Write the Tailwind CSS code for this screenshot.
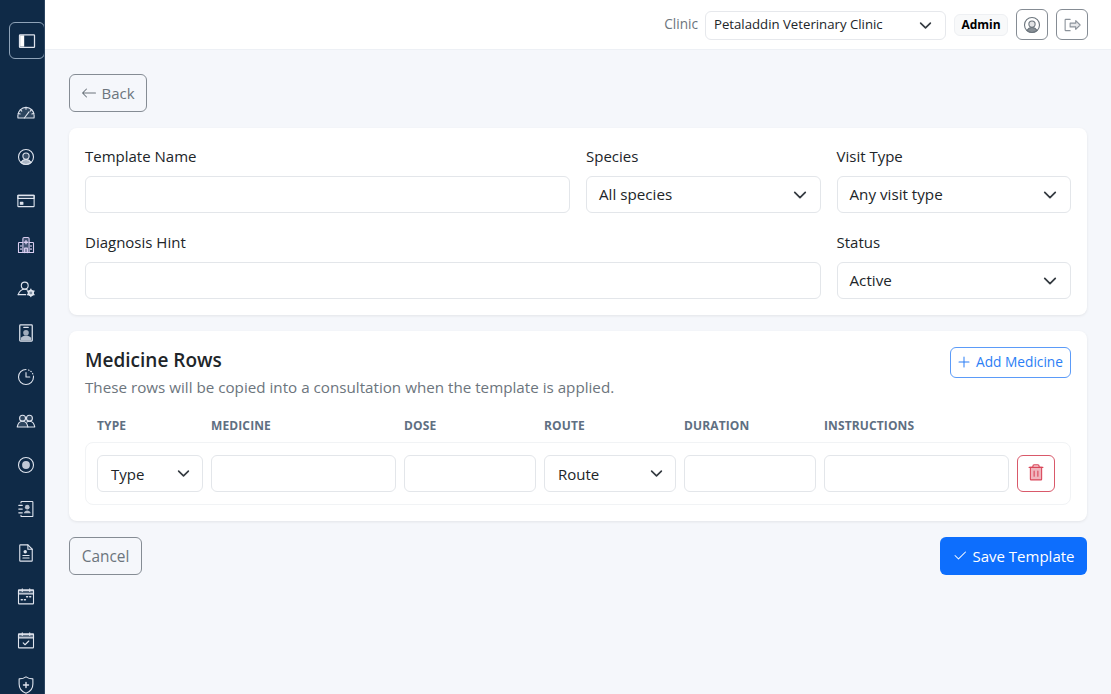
<!doctype html>
<html lang="en">
<head>
<meta charset="utf-8">
<title>Template</title>
<script src="https://cdn.jsdelivr.net/npm/@tailwindcss/browser@4"></script>
</head>
<body class="m-0 overflow-hidden bg-[#f5f7fb] font-['Open_Sans','Noto_Sans',sans-serif] text-[#212529]">
<div class="flex h-[694px] w-[1111px] overflow-hidden">
  <aside class="flex w-[45px] shrink-0 flex-col overflow-hidden border-r border-[#2c4561] bg-[#0f2a47] text-[#dfe4ee]">
    <div class="h-[91px] shrink-0 pt-[22px] pl-[9px]">
      <div class="flex h-[37px] w-[36px] items-center justify-center rounded-md border border-[#8fa3b8]">
        <svg class="h-5 w-5" viewBox="0 0 256 256" fill="none" stroke="currentColor" stroke-width="16" stroke-linejoin="round"><rect x="32" y="48" width="192" height="160" rx="8"/><rect x="40" y="56" width="52" height="144" fill="#fff" stroke="none"/></svg>
      </div>
    </div>
    <nav class="flex flex-col">
      <a class="flex h-11 shrink-0 items-center justify-center pl-[7px]"><svg class="h-5 w-5" viewBox="0 0 256 256" fill="none" stroke="currentColor" stroke-width="14" stroke-linecap="round" stroke-linejoin="round"><path fill="currentColor" fill-opacity=".15" d="M24 184v-23C24 104 70 56 128 56a104 104 0 0 1 104 104v24a8 8 0 0 1-8 8H32a8 8 0 0 1-8-8Z"/><path d="M128 56v24M28 133l26 7M228 133l-26 7M56 86l18 18M200 86l-18 18M107 192l59-78"/></svg></a>
      <a class="flex h-11 shrink-0 items-center justify-center pl-[7px]"><svg class="h-5 w-5" viewBox="0 0 256 256" fill="none" stroke="currentColor" stroke-width="14" stroke-linecap="round" stroke-linejoin="round"><circle cx="128" cy="128" r="96"/><path fill="currentColor" fill-opacity=".75" d="M64 199a72 72 0 0 1 128 0 96 96 0 0 1-128 0Z"/><circle cx="128" cy="116" r="40" fill="currentColor" fill-opacity=".2"/></svg></a>
      <a class="flex h-11 shrink-0 items-center justify-center pl-[7px]"><svg class="h-5 w-5" viewBox="0 0 256 256" fill="none" stroke="currentColor" stroke-width="14" stroke-linecap="round" stroke-linejoin="round"><rect x="24" y="56" width="208" height="144" rx="8"/><path fill="currentColor" fill-opacity=".2" d="M24 56h208v40H24z"/><rect x="56" y="146" width="32" height="24" fill="currentColor"/></svg></a>
      <a class="flex h-11 shrink-0 items-center justify-center pl-[7px]"><svg class="h-5 w-5" viewBox="0 0 256 256" fill="none" stroke="#d9cdf0" stroke-width="14" stroke-linecap="round" stroke-linejoin="round"><path fill="#d9cdf0" fill-opacity=".25" d="M88 224V48a16 16 0 0 1 16-16h48a16 16 0 0 1 16 16v176"/><path d="M88 96H40a8 8 0 0 0-8 8v120h192V104a8 8 0 0 0-8-8h-48"/><path d="M128 72v40M108 92h40M64 136v8M64 176v8M192 136v8M192 176v8M112 224v-56h32v56" stroke-width="18"/></svg></a>
      <a class="flex h-11 shrink-0 items-center justify-center pl-[7px]"><svg class="h-5 w-5" viewBox="0 0 256 256" fill="none" stroke="currentColor" stroke-width="14" stroke-linecap="round" stroke-linejoin="round"><circle cx="112" cy="84" r="44"/><path d="M28 200c14-42 48-68 84-68 12 0 24 3 34 8"/><path d="M28 200h96"/><circle cx="190" cy="178" r="30" fill="currentColor" fill-opacity=".55" stroke-width="22"/><path stroke-width="18" d="M190 132v16M190 208v16M150 155l14 8M216 193l14 8M150 201l14-8M216 163l14-8"/></svg></a>
      <a class="flex h-11 shrink-0 items-center justify-center pl-[7px]"><svg class="h-5 w-5" viewBox="0 0 256 256" fill="none" stroke="currentColor" stroke-width="16" stroke-linecap="round" stroke-linejoin="round"><rect x="48" y="24" width="160" height="208" rx="10"/><path d="M100 56h56"/><circle cx="128" cy="124" r="36" fill="currentColor" fill-opacity=".7" stroke="none"/><path fill="currentColor" fill-opacity=".8" stroke="none" d="M62 190c14-20 38-28 66-28s52 8 66 28v34H62Z"/></svg></a>
      <a class="flex h-11 shrink-0 items-center justify-center pl-[7px]"><svg class="h-5 w-5" viewBox="0 0 256 256" fill="none" stroke="currentColor" stroke-width="14" stroke-linecap="round" stroke-linejoin="round"><path d="M128 32a96 96 0 1 0 96 96"/><path stroke-dasharray="8 26" d="M160 38a96 96 0 0 1 64 90"/><path d="M128 72v56h48"/></svg></a>
      <a class="flex h-11 shrink-0 items-center justify-center pl-[7px]"><svg class="h-5 w-5" viewBox="0 0 256 256" fill="none" stroke="currentColor" stroke-width="14" stroke-linecap="round" stroke-linejoin="round"><circle cx="84" cy="92" r="38" fill="currentColor" fill-opacity=".15"/><circle cx="172" cy="92" r="38" fill="currentColor" fill-opacity=".15"/><path d="M16 204c8-44 34-72 68-72s60 28 68 72Z" fill="currentColor" fill-opacity=".15"/><path d="M140 140c10-6 20-8 32-8 34 0 60 28 68 72h-88"/></svg></a>
      <a class="flex h-11 shrink-0 items-center justify-center pl-[7px]"><svg class="h-5 w-5" viewBox="0 0 256 256" fill="none" stroke="currentColor" stroke-width="14"><circle cx="128" cy="128" r="96"/><circle cx="128" cy="128" r="50" fill="currentColor" fill-opacity=".85" stroke="none"/></svg></a>
      <a class="flex h-11 shrink-0 items-center justify-center pl-[7px]"><svg class="h-5 w-5" viewBox="0 0 256 256" fill="none" stroke="currentColor" stroke-width="14" stroke-linecap="round" stroke-linejoin="round"><path d="M64 48V40a8 8 0 0 1 8-8h136a8 8 0 0 1 8 8v176a8 8 0 0 1-8 8H72a8 8 0 0 1-8-8v-8"/><path stroke-width="16" d="M36 80h44M36 128h44M36 176h44"/><circle cx="144" cy="104" r="30" fill="currentColor" fill-opacity=".8" stroke="none"/><path fill="currentColor" fill-opacity=".8" stroke="none" d="M100 182c6-24 24-36 44-36s38 12 44 36Z"/></svg></a>
      <a class="flex h-11 shrink-0 items-center justify-center pl-[7px]"><svg class="h-5 w-5" viewBox="0 0 256 256" fill="none" stroke="currentColor" stroke-width="14" stroke-linecap="round" stroke-linejoin="round"><path d="M200 232H56a8 8 0 0 1-8-8V32a8 8 0 0 1 8-8h96l56 56v144a8 8 0 0 1-8 8Z"/><path d="M152 24v56h56"/><circle cx="118" cy="112" r="22" fill="currentColor" stroke="none"/><path d="M88 160h80M88 192h80"/></svg></a>
      <a class="flex h-11 shrink-0 items-center justify-center pl-[7px]"><svg class="h-5 w-5" viewBox="0 0 256 256" fill="none" stroke="currentColor" stroke-width="14" stroke-linecap="round" stroke-linejoin="round"><rect x="32" y="40" width="192" height="176" rx="8"/><path fill="currentColor" fill-opacity=".3" d="M32 40h192v48H32z"/><path d="M176 24v32M80 24v32"/><path stroke-width="20" d="M136 124h12M176 124h12M68 164h12M108 164h12"/></svg></a>
      <a class="flex h-11 shrink-0 items-center justify-center pl-[7px]"><svg class="h-5 w-5" viewBox="0 0 256 256" fill="none" stroke="currentColor" stroke-width="14" stroke-linecap="round" stroke-linejoin="round"><rect x="32" y="40" width="192" height="176" rx="8"/><path fill="currentColor" fill-opacity=".4" d="M32 40h192v48H32z"/><path d="M176 24v32M80 24v32M92 152l24 24 48-48"/></svg></a>
      <a class="flex h-11 shrink-0 items-center justify-center pl-[7px]"><svg class="h-5 w-5" viewBox="0 0 256 256" fill="none" stroke="currentColor" stroke-width="14" stroke-linecap="round" stroke-linejoin="round"><path d="M128 24c24 18 56 26 88 26v66c0 72-48 104-88 118-40-14-88-46-88-118V50c32 0 64-8 88-26Z"/><path stroke-width="18" d="M96 128h64M128 96v64"/></svg></a>
    </nav>
  </aside>
  <div class="flex min-w-0 flex-1 flex-col">
    <header class="flex h-[50px] shrink-0 items-center justify-end border-b border-[#edf0f5] bg-white pr-[23px]">
      <span class="mr-[7px] text-[13.6px] text-[#6c757d]">Clinic</span>
      <div class="mt-[1px] mr-2 flex h-[29px] w-[241px] items-center justify-between rounded-md border border-[#e6e8ec] bg-white pr-[13px] pl-2 text-[13.2px]">
        <span>Petaladdin Veterinary Clinic</span>
        <svg class="h-[13px] w-[13px]" viewBox="0 0 16 16" fill="none" stroke="#343a40" stroke-width="2" stroke-linecap="round" stroke-linejoin="round"><path d="m2 5 6 6 6-6"/></svg>
      </div>
      <span class="mr-2 flex h-[22px] w-[54px] items-center justify-center rounded-md border border-[#eef0f3] bg-[#f8f9fa] text-[12px] font-bold text-black">Admin</span>
      <button class="mr-2 flex h-[31px] w-[32px] items-center justify-center rounded-md border border-[#858c94] text-[#6c757d]"><svg class="h-5 w-5" viewBox="0 0 256 256" fill="none" stroke="currentColor" stroke-width="14" stroke-linecap="round" stroke-linejoin="round"><circle cx="128" cy="128" r="96"/><path fill="currentColor" fill-opacity=".8" d="M64 199a72 72 0 0 1 128 0 96 96 0 0 1-128 0Z"/><circle cx="128" cy="116" r="40" fill="currentColor" fill-opacity=".2"/></svg></button>
      <button class="flex h-[31px] w-[32px] items-center justify-center rounded-md border border-[#858c94] text-[#8b929a]"><svg class="h-5 w-5" viewBox="0 0 256 256" fill="none" stroke="currentColor" stroke-width="14" stroke-linecap="round" stroke-linejoin="round"><path d="M104 56H48a8 8 0 0 0-8 8v128a8 8 0 0 0 8 8h56"/><path fill="currentColor" fill-opacity=".2" d="M104 104h72V72l56 56-56 56v-32h-72Z"/></svg></button>
    </header>
    <main class="flex-1 px-6 pt-6">
      <button class="mb-4 flex h-[37.5px] w-[78px] items-center justify-center gap-1 rounded-md border border-[#858c94] text-[15px] text-[#6c757d]"><svg class="h-4 w-4" viewBox="0 0 16 16" fill="currentColor"><path fill-rule="evenodd" d="M15 8a.5.5 0 0 0-.5-.5H2.707l3.147-3.146a.5.500 0 1 0-.708-.708l-4 4a.5.500 0 0 0 0 .708l4 4a.5.500 0 0 0 .708-.708L2.707 8.500H14.500A.5.5 0 0 0 15 8z"/></svg>Back</button>
      <section class="mb-4 rounded-lg bg-white px-4 pt-4 pb-[15.5px] shadow-[0_1px_3px_rgba(0,0,0,0.08)]">
        <div class="grid grid-cols-12 gap-x-4 gap-y-[16.5px]">
          <label class="col-span-6 block"><span class="mb-2 block h-6 text-[15px] leading-6">Template Name</span><span class="block h-[37.5px] rounded-md border border-[#e3e6ea] bg-white"></span></label>
          <label class="col-span-3 block"><span class="mb-2 block h-6 text-[15px] leading-6">Species</span><span class="flex h-[37.5px] items-center justify-between rounded-md border border-[#e3e6ea] pt-[1px] pr-[13px] pl-3 text-[15.2px]">All species<svg class="h-3.5 w-3.5" viewBox="0 0 16 16" fill="none" stroke="#343a40" stroke-width="2" stroke-linecap="round" stroke-linejoin="round"><path d="m2 5 6 6 6-6"/></svg></span></label>
          <label class="col-span-3 block"><span class="mb-2 block h-6 text-[15px] leading-6">Visit Type</span><span class="flex h-[37.5px] items-center justify-between rounded-md border border-[#e3e6ea] pt-[1px] pr-[13px] pl-3 text-[15.2px]">Any visit type<svg class="h-3.5 w-3.5" viewBox="0 0 16 16" fill="none" stroke="#343a40" stroke-width="2" stroke-linecap="round" stroke-linejoin="round"><path d="m2 5 6 6 6-6"/></svg></span></label>
          <label class="col-span-9 block"><span class="mb-2 block h-6 text-[15px] leading-6">Diagnosis Hint</span><span class="block h-[37.5px] rounded-md border border-[#e3e6ea] bg-white"></span></label>
          <label class="col-span-3 block"><span class="mb-2 block h-6 text-[15px] leading-6">Status</span><span class="flex h-[37.5px] items-center justify-between rounded-md border border-[#e3e6ea] pt-[1px] pr-[13px] pl-3 text-[15.2px]">Active<svg class="h-3.5 w-3.5" viewBox="0 0 16 16" fill="none" stroke="#343a40" stroke-width="2" stroke-linecap="round" stroke-linejoin="round"><path d="m2 5 6 6 6-6"/></svg></span></label>
        </div>
      </section>
      <section class="mb-4 rounded-lg bg-white p-4 shadow-[0_1px_3px_rgba(0,0,0,0.08)]">
        <div class="flex items-start justify-between">
          <div>
            <h2 class="text-[19px] leading-[26px] font-semibold">Medicine Rows</h2>
            <p class="mt-[2px] text-[15.2px] leading-6 text-[#6c757d]">These rows will be copied into a consultation when the template is applied.</p>
          </div>
          <button class="flex h-[31px] w-[121px] items-center justify-center gap-1 rounded-md border border-[#5b9bf8] pr-[2px] text-[13.7px] text-[#2b7ef5]"><svg class="h-4 w-4" viewBox="0 0 16 16" fill="currentColor"><path d="M8 2.500a.5.5 0 0 1 .5.5v4.500H13a.5.5 0 0 1 0 1H8.500V13a.5.5 0 0 1-1 0V8.500H3a.5.5 0 0 1 0-1h4.500V3a.5.5 0 0 1 .5-.5z"/></svg>Add Medicine</button>
        </div>
        <div class="mt-[19px] grid grid-cols-[106px_185px_132px_132px_132px_185px_38px] gap-x-2 px-3 text-[12px] leading-4 font-bold tracking-[0.01em] text-[#5f6f82] uppercase">
          <span>Type</span><span>Medicine</span><span>Dose</span><span>Route</span><span>Duration</span><span>Instructions</span><span></span>
        </div>
        <div class="mt-[8px] grid grid-cols-[106px_185px_132px_132px_132px_185px_38px] gap-x-2 rounded-lg border border-[#f1f3f5] py-3 pr-3 pl-[11px]">
          <span class="flex h-[37.5px] items-center justify-between rounded-md border border-[#e3e6ea] pt-[1px] pr-3 pl-[13px] text-[15px]">Type<svg class="h-[13px] w-[13px]" viewBox="0 0 16 16" fill="none" stroke="#343a40" stroke-width="2" stroke-linecap="round" stroke-linejoin="round"><path d="m2 5 6 6 6-6"/></svg></span>
          <span class="h-[37.5px] rounded-md border border-[#e3e6ea]"></span>
          <span class="h-[37.5px] rounded-md border border-[#e3e6ea]"></span>
          <span class="flex h-[37.5px] items-center justify-between rounded-md border border-[#e3e6ea] pt-[1px] pr-3 pl-[13px] text-[15px]">Route<svg class="h-[13px] w-[13px]" viewBox="0 0 16 16" fill="none" stroke="#343a40" stroke-width="2" stroke-linecap="round" stroke-linejoin="round"><path d="m2 5 6 6 6-6"/></svg></span>
          <span class="h-[37.5px] rounded-md border border-[#e3e6ea]"></span>
          <span class="h-[37.5px] rounded-md border border-[#e3e6ea]"></span>
          <button class="flex h-[37.5px] w-[38px] items-center justify-center rounded-md border border-[#d9596a] text-[#d9475a]"><svg class="h-5 w-5" viewBox="0 0 256 256" fill="none" stroke="currentColor" stroke-width="14" stroke-linecap="round" stroke-linejoin="round"><path fill="currentColor" fill-opacity=".4" d="M200 56v152a8 8 0 0 1-8 8H64a8 8 0 0 1-8-8V56Z"/><path d="M216 56H40M168 56V40a16 16 0 0 0-16-16h-48a16 16 0 0 0-16 16v16M104 104v64M152 104v64"/></svg></button>
        </div>
      </section>
      <div class="flex items-center justify-between">
        <button class="h-[37.5px] w-[73px] rounded-md border border-[#858c94] pt-[1px] text-[15.4px] text-[#6c757d]">Cancel</button>
        <button class="flex h-[37.5px] w-[147px] items-center justify-center gap-1 rounded-md bg-[#0d6efd] text-[15px] text-white"><svg class="h-4 w-4" viewBox="0 0 16 16" fill="currentColor"><path d="M13.854 3.646a.5.5 0 0 1 0 .708l-7 7a.5.5 0 0 1-.708 0l-3.500-3.500a.5.500 0 1 1 .708-.708L6.500 10.293l6.646-6.647a.5.5 0 0 1 .708 0z"/></svg>Save Template</button>
      </div>
    </main>
  </div>
</div>
</body>
</html>
